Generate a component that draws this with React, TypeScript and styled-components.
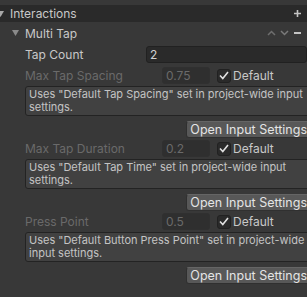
import React from "react";
import styled, { createGlobalStyle } from "styled-components";

const Global = createGlobalStyle`
  html, body { margin: 0; padding: 0; background: #383838; }
  body { font-family: Inter, "Noto Sans", sans-serif; font-size: 12px; color: #c4c4c4; overflow: hidden; }
`;

const Root = styled.div`
  width: 307px;
  height: 297px;
  background: #383838;
  padding-top: 5px;
  box-sizing: border-box;
  overflow: hidden;
  display: flex;
  flex-direction: column;
`;

const Header = styled.div`
  height: 17px;
  flex: none;
  background: #2a2a2a;
  display: flex;
  align-items: center;
  position: relative;
  padding-left: 10px;
  color: #c8c8c8;
`;

const HeaderTitle = styled.span`
  flex: 1;
`;

const IconBtn = styled.span`
  width: 11px;
  display: flex;
  align-items: center;
  justify-content: center;
  margin-right: 4px;
`;

const Foldout = styled.div<{ $left: number }>`
  position: absolute;
  left: ${(p) => p.$left}px;
  top: 50%;
  transform: translateY(-50%);
  display: flex;
`;

const SubHeader = styled.div`
  height: 22px;
  flex: none;
  display: flex;
  align-items: center;
  position: relative;
  padding-left: 25px;
  color: #c8c8c8;
`;

const SubTitle = styled.span`
  flex: 1;
`;

const Tools = styled.div`
  display: flex;
  align-items: center;
  gap: 4px;
  margin-right: 5px;
`;

const Row = styled.div`
  height: 17px;
  flex: none;
  display: flex;
  align-items: center;
  margin: 2px 0 0 25px;
`;

const Label = styled.span<{ $disabled?: boolean }>`
  width: 121px;
  flex: none;
  color: ${(p) => (p.$disabled ? "#6a6a6a" : "#c8c8c8")};
  white-space: nowrap;
`;

const Field = styled.div<{ $disabled?: boolean; $width?: number }>`
  box-sizing: border-box;
  height: 17px;
  ${(p) => (p.$width ? `width: ${p.$width}px; flex: none;` : "flex: 1;")}
  background: ${(p) => (p.$disabled ? "#2f2f2f" : "#2a2a2a")};
  border: 1px solid ${(p) => (p.$disabled ? "#303030" : "#212121")};
  border-radius: 3px;
  color: ${(p) => (p.$disabled ? "#6a6a6a" : "#d2d2d2")};
  padding-left: 3px;
  display: flex;
  align-items: center;
  margin-left: ${(p) => (p.$disabled ? "16px" : "0")};
`;

const Check = styled.div`
  box-sizing: border-box;
  width: 14px;
  height: 14px;
  margin-left: 7px;
  background: #2a2a2a;
  border: 1px solid #212121;
  border-radius: 3px;
  display: flex;
  align-items: center;
  justify-content: center;
  flex: none;
`;

const CheckLabel = styled.span`
  margin-left: 2px;
  color: #c8c8c8;
`;

const Section = styled.div<{ $first?: boolean }>`
  display: flex;
  flex-direction: column;
  flex: none;
  margin-top: ${(p) => (p.$first ? "2px" : "0")};
`;

const HelpBox = styled.div`
  box-sizing: border-box;
  margin: 2px -4px 0 25px;
  height: 30px;
  flex: none;
  background: #414141;
  border: 1px solid #232323;
  border-radius: 3px;
  padding: 1px 3px;
  font-size: 11px;
  line-height: 13px;
  color: #c4c4c4;
`;

const ButtonRow = styled.div`
  display: flex;
  flex: none;
  justify-content: flex-end;
  margin: 5px -4px 0 0;
`;

const Button = styled.button`
  height: 17px;
  padding: 0 3px 0 3px;
  background: #585858;
  border: 1px solid #303030;
  border-top-color: #656565;
  border-radius: 3px;
  color: #e4e4e4;
  font-family: Inter, "Noto Sans", sans-serif;
  font-size: 12.5px;
  line-height: 15px;
  white-space: nowrap;
`;

const Tri = ({ color = "#a8a8a8" }: { color?: string }) => (
  <svg width="7" height="6" viewBox="0 0 7 6">
    <path d="M0 0 H7 L3.5 6 Z" fill={color} />
  </svg>
);

const Plus = () => (
  <svg width="9" height="9" viewBox="0 0 9 9">
    <path d="M4.5 1 V8 M1 4.5 H8" stroke="#c4c4c4" strokeWidth="1.6" />
  </svg>
);

const Up = () => (
  <svg width="9" height="6" viewBox="0 0 9 6">
    <path d="M1 5 L4.5 1.5 L8 5" stroke="#6e6e6e" strokeWidth="1.5" fill="none" />
  </svg>
);
const Down = () => (
  <svg width="9" height="6" viewBox="0 0 9 6">
    <path d="M1 1 L4.5 4.5 L8 1" stroke="#7a7a7a" strokeWidth="1.5" fill="none" />
  </svg>
);
const Minus = () => (
  <svg width="9" height="4" viewBox="0 0 9 4">
    <path d="M1 2 H8" stroke="#c4c4c4" strokeWidth="2" />
  </svg>
);
const Tick = () => (
  <svg width="10" height="9" viewBox="0 0 10 9">
    <path d="M1 4.5 L3.8 7.5 L9 1" stroke="#e0e0e0" strokeWidth="1.6" fill="none" />
  </svg>
);

const sections = [
  {
    label: "Max Tap Spacing",
    value: "0.75",
    help: 'Uses "Default Tap Spacing" set in project-wide input settings.',
  },
  {
    label: "Max Tap Duration",
    value: "0.2",
    help: 'Uses "Default Tap Time" set in project-wide input settings.',
  },
  {
    label: "Press Point",
    value: "0.5",
    help: 'Uses "Default Button Press Point" set in project-wide input settings.',
  },
];

export default function App() {
  return (
    <Root>
      <Global />
      <Header>
        <Foldout $left={-3}>
          <Tri />
        </Foldout>
        <HeaderTitle>Interactions</HeaderTitle>
        <IconBtn>
          <Plus />
        </IconBtn>
      </Header>
      <SubHeader>
        <Foldout $left={12}>
          <Tri color="#8a8a8a" />
        </Foldout>
        <SubTitle>Multi Tap</SubTitle>
        <Tools>
          <Up />
          <Down />
          <Minus />
        </Tools>
      </SubHeader>
      <Row>
        <Label>Tap Count</Label>
        <Field>2</Field>
      </Row>
      {sections.map((s, i) => (
        <Section key={s.label} $first={i === 0}>
          <Row>
            <Label $disabled>{s.label}</Label>
            <Field $disabled $width={48}>
              {s.value}
            </Field>
            <Check>
              <Tick />
            </Check>
            <CheckLabel>Default</CheckLabel>
          </Row>
          <HelpBox>{s.help}</HelpBox>
          <ButtonRow>
            <Button>Open Input Settings</Button>
          </ButtonRow>
        </Section>
      ))}
    </Root>
  );
}
